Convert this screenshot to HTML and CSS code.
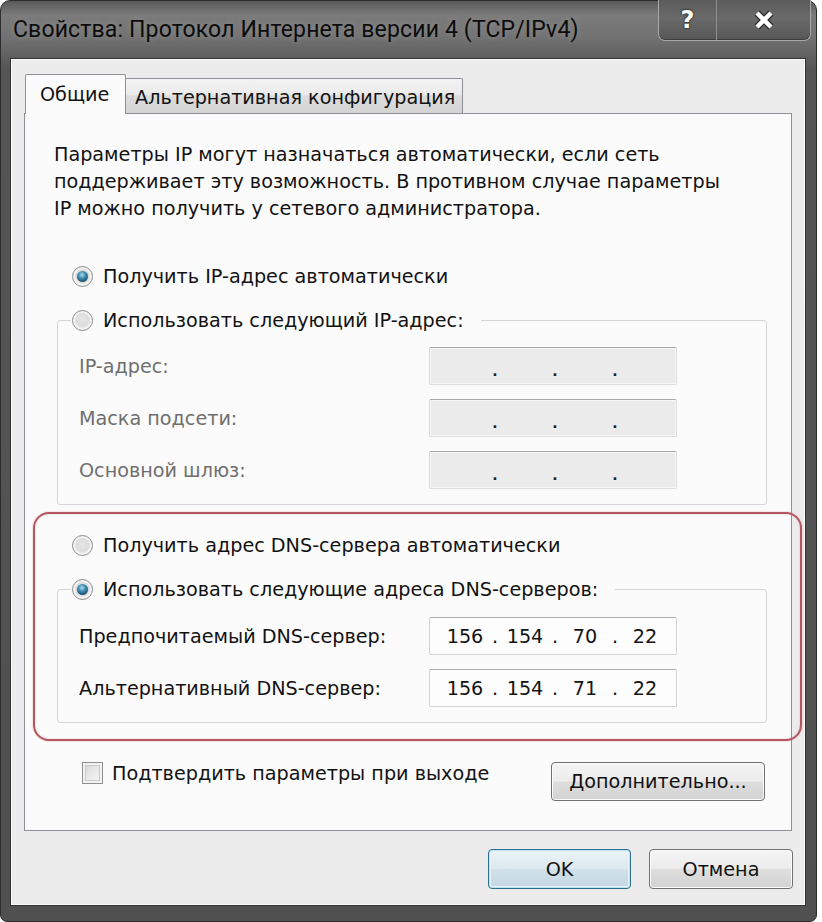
FILE: index.html
```html
<!DOCTYPE html>
<html lang="ru">
<head>
<meta charset="utf-8">
<title>Свойства: Протокол Интернета версии 4 (TCP/IPv4)</title>
<link rel="stylesheet" href="styles.css">
</head>
<body>
<div class="window">
  <div class="titlebar">
    <div class="title">Свойства: Протокол Интернета версии 4 (TCP/IPv4)</div>
    <div class="caption-buttons">
      <div class="cap-btn cap-help">?</div>
      <div class="cap-btn cap-close">
        <svg width="26" height="22" viewBox="0 0 26 22">
          <path d="M6 4 L20 18 M20 4 L6 18" stroke="#2a2a2a" stroke-width="7" fill="none"/>
          <path d="M6 4 L20 18 M20 4 L6 18" stroke="#ffffff" stroke-width="4.5" fill="none"/>
        </svg>
      </div>
    </div>
  </div>
  <div class="client">
    <div class="tabs">
      <div class="tab tab-active">Общие</div>
      <div class="tab tab-inactive">Альтернативная конфигурация</div>
    </div>
    <div class="panel">
      <p class="desc">Параметры IP могут назначаться автоматически, если сеть<br>поддерживает эту возможность. В противном случае параметры<br>IP можно получить у сетевого администратора.</p>

      <div class="option"><span class="radio radio-on"></span><span>Получить IP-адрес автоматически</span></div>

      <div class="group">
        <div class="group-head"><span class="radio"></span><span>Использовать следующий IP-адрес:</span></div>
        <div class="field field-first disabled">
          <span class="label">IP-адрес:</span>
          <div class="ipbox ipbox-disabled"><span class="seg"></span><span class="dot">.</span><span class="seg"></span><span class="dot">.</span><span class="seg"></span><span class="dot">.</span><span class="seg"></span></div>
        </div>
        <div class="field disabled">
          <span class="label">Маска подсети:</span>
          <div class="ipbox ipbox-disabled"><span class="seg"></span><span class="dot">.</span><span class="seg"></span><span class="dot">.</span><span class="seg"></span><span class="dot">.</span><span class="seg"></span></div>
        </div>
        <div class="field disabled">
          <span class="label">Основной шлюз:</span>
          <div class="ipbox ipbox-disabled"><span class="seg"></span><span class="dot">.</span><span class="seg"></span><span class="dot">.</span><span class="seg"></span><span class="dot">.</span><span class="seg"></span></div>
        </div>
      </div>

      <div class="option option-dns"><span class="radio"></span><span>Получить адрес DNS-сервера автоматически</span></div>

      <div class="group group-dns">
        <div class="group-head"><span class="radio radio-on"></span><span>Использовать следующие адреса DNS-серверов:</span></div>
        <div class="field field-first field-dns">
          <span class="label">Предпочитаемый DNS-сервер:</span>
          <div class="ipbox"><span class="seg">156</span><span class="dot">.</span><span class="seg">154</span><span class="dot">.</span><span class="seg">70</span><span class="dot">.</span><span class="seg">22</span></div>
        </div>
        <div class="field">
          <span class="label">Альтернативный DNS-сервер:</span>
          <div class="ipbox"><span class="seg">156</span><span class="dot">.</span><span class="seg">154</span><span class="dot">.</span><span class="seg">71</span><span class="dot">.</span><span class="seg">22</span></div>
        </div>
      </div>

      <div class="bottom-row">
        <div class="check-wrap"><span class="checkbox"></span><span class="check-label">Подтвердить параметры при выходе</span></div>
        <div class="btn btn-advanced">Дополнительно...</div>
      </div>

      <div class="annot"></div>
    </div>
    <div class="dialog-buttons">
      <div class="btn btn-dialog btn-default">OK</div>
      <div class="btn btn-dialog">Отмена</div>
    </div>
  </div>
</div>
</body>
</html>
```

FILE: styles.css
```css
* {
  box-sizing: border-box;
}

html,
body {
  margin: 0;
  padding: 0;
  background: #ffffff;
}

body {
  font-family: "DejaVu Sans", sans-serif;
  font-size: 19.2px;
  color: #121212;
}

.window {
  width: 817px;
  height: 922px;
  display: flex;
  flex-direction: column;
  padding: 0 10px 15px 9px;
  border: 1px solid #2c2c2c;
  border-radius: 10px 10px 7px 7px;
  background: linear-gradient(180deg, #5a5a5a 0px, #7b7b7b 14px, #727272 36px, #5e5e5e 57px, #555555 70px, #505050 100%);
}

/* ---------- title bar ---------- */
.titlebar {
  height: 57px;
  display: flex;
  align-items: flex-start;
  flex-shrink: 0;
}

.title {
  margin-top: 14px;
  padding-left: 3px;
  font-family: "Roboto", "Noto Sans", sans-serif;
  font-size: 23px;
  letter-spacing: 0.15px;
  line-height: 30px;
  color: #0c0c0c;
  text-shadow: 0 0 6px rgba(200, 200, 200, 0.35);
}

.caption-buttons {
  margin-left: auto;
  margin-right: -5px;
  margin-top: -1px;
  height: 41px;
  display: flex;
  border: 1px solid #a8a8a8;
  border-top: none;
  border-radius: 0 0 7px 7px;
  background: linear-gradient(180deg, #5c5c5c 0%, #6a6a6a 45%, #575757 100%);
  box-shadow: inset 0 -1px 0 #3d3d3d;
  overflow: hidden;
}

.cap-btn {
  display: flex;
  align-items: center;
  justify-content: center;
  height: 100%;
}

.cap-help {
  width: 58px;
  border-right: 1px solid #8f8f8f;
  font-family: "DejaVu Sans", sans-serif;
  font-weight: bold;
  font-size: 24px;
  color: #ffffff;
  text-shadow: 0 0 2px #222, 0 0 2px #222;
}

.cap-close {
  width: 93px;
}

/* ---------- client area ---------- */
.client {
  flex: 1;
  display: flex;
  flex-direction: column;
  background: #ececec;
  border: 1px solid #333333;
  box-shadow: inset 0 0 0 1px #fafafa;
  padding-top: 15px;
}

.tabs {
  display: flex;
  align-items: flex-end;
  margin-left: 14px;
  height: 39px;
  position: relative;
  z-index: 2;
}

.tab {
  border: 1px solid #8d9096;
  border-bottom: none;
  line-height: 24px;
  white-space: nowrap;
}

.tab-active {
  width: 101px;
  height: 40px;
  margin-bottom: -1px;
  padding: 8px 0 0 14px;
  background: #fbfbfb;
  border-radius: 2px 2px 0 0;
  position: relative;
  z-index: 2;
}

.tab-inactive {
  width: 338px;
  height: 35px;
  margin-left: -1px;
  padding: 7px 0 0 9px;
  background: linear-gradient(180deg, #f3f3f3 0%, #ebebeb 45%, #dddddd 50%, #d4d4d4 100%);
  border-radius: 2px 2px 0 0;
}

.panel {
  position: relative;
  margin-left: 13px;
  width: 768px;
  height: 718px;
  flex-shrink: 0;
  border: 1px solid #8d9096;
  background: #fbfbfb;
  padding: 27px 26px 30px 29px;
  display: flex;
  flex-direction: column;
}

.desc {
  margin: 0;
  line-height: 27px;
}

.option {
  margin-top: 39px;
  margin-left: 18px;
  height: 30px;
  display: flex;
  align-items: center;
  white-space: nowrap;
}

.option-dns {
  margin-top: 25px;
}

.radio {
  width: 21px;
  height: 21px;
  border-radius: 50%;
  flex-shrink: 0;
  margin-right: 10px;
  border: 1px solid #8a8c8e;
  background: radial-gradient(circle at 50% 45%, #e6e6e6 0%, #dcdcdc 45%, #f6f6f6 75%, #ffffff 100%);
  box-shadow: inset 0 0 0 2px #f4f4f4;
  position: relative;
}

.radio-on::after {
  content: "";
  position: absolute;
  left: 4px;
  top: 4px;
  width: 11px;
  height: 11px;
  border-radius: 50%;
  background: radial-gradient(circle at 45% 35%, #a9dcf2 0%, #3b87ab 40%, #164a66 80%, #0d2f44 100%);
}

.group {
  margin-top: 29px;
  margin-left: 3px;
  width: 710px;
  border: 1px solid #d2d6d9;
  border-radius: 3px;
  padding: 0 0 15px 21px;
}

.group-head {
  margin-top: -16px;
  margin-left: -8px;
  width: max-content;
  height: 30px;
  display: flex;
  align-items: center;
  padding: 0 17px 0 1px;
  background: #fbfbfb;
  white-space: nowrap;
}

.field {
  display: flex;
  align-items: center;
  height: 38px;
  margin-top: 14px;
}

.field-first {
  margin-top: 12px;
}

.field-dns {
  margin-top: 13px;
}

.label {
  width: 350px;
  flex-shrink: 0;
  white-space: nowrap;
}

.disabled .label {
  color: #6f6f6f;
}

.ipbox {
  width: 248px;
  height: 38px;
  display: flex;
  align-items: center;
  padding-left: 10px;
  border: 1px solid #d3d3d3;
  border-top-color: #aeaeae;
  border-radius: 2px;
  background: #fdfdfd;
  color: #141414;
}

.ipbox-disabled {
  background: #ebebeb;
  border-color: #dcdcdc;
  border-top-color: #a9a9a9;
  box-shadow: inset 0 0 0 1px #f7f7f7;
}

.seg {
  width: 50px;
  text-align: center;
}

.dot {
  width: 10px;
  text-align: center;
}

.ipbox-disabled .dot {
  color: #222;
  font-weight: bold;
  position: relative;
  top: 5px;
  font-size: 14px;
}

.bottom-row {
  margin-top: 39px;
  height: 38px;
  display: flex;
  align-items: flex-start;
}

.check-wrap {
  margin-left: 28px;
  display: flex;
  align-items: center;
  height: 22px;
  white-space: nowrap;
}

.checkbox {
  width: 21px;
  height: 22px;
  margin-right: 9px;
  border: 1px solid #8e8f8f;
  background: linear-gradient(135deg, #d6d6d6 0%, #ececec 60%, #f6f6f6 100%);
  box-shadow: inset 0 0 0 2px #f3f3f3, inset 0 0 0 3px #c9c9c9;
}

.btn {
  display: flex;
  align-items: center;
  justify-content: center;
  border: 1px solid #707070;
  border-radius: 4px;
  background: linear-gradient(180deg, #f4f4f4 0%, #ececec 48%, #dedede 52%, #d2d2d2 100%);
  box-shadow: inset 0 0 0 1px #fcfcfc;
  color: #111;
  white-space: nowrap;
}

.btn-advanced {
  margin-left: auto;
  width: 214px;
  height: 39px;
}

.dialog-buttons {
  display: flex;
  justify-content: flex-end;
  gap: 18px;
  margin-top: 18px;
  margin-right: 12px;
}

.btn-dialog {
  width: 144px;
  height: 40px;
}

.btn-default {
  width: 143px;
  border-color: #2f6f8e;
  background: linear-gradient(180deg, #eaf3f7 0%, #dde9ef 48%, #cfe0e8 52%, #c3d9e3 100%);
  box-shadow: inset 0 0 0 1px #bfe3f3, inset 0 0 0 2px #e6f4fa;
}

.annot {
  position: absolute;
  left: 8px;
  top: 398px;
  width: 769px;
  height: 229px;
  border: 2px solid #b4555f;
  border-radius: 16px;
  box-shadow: 0 0 2px rgba(190, 90, 100, 0.45), inset 0 0 2px rgba(190, 90, 100, 0.35);
  pointer-events: none;
}
```
